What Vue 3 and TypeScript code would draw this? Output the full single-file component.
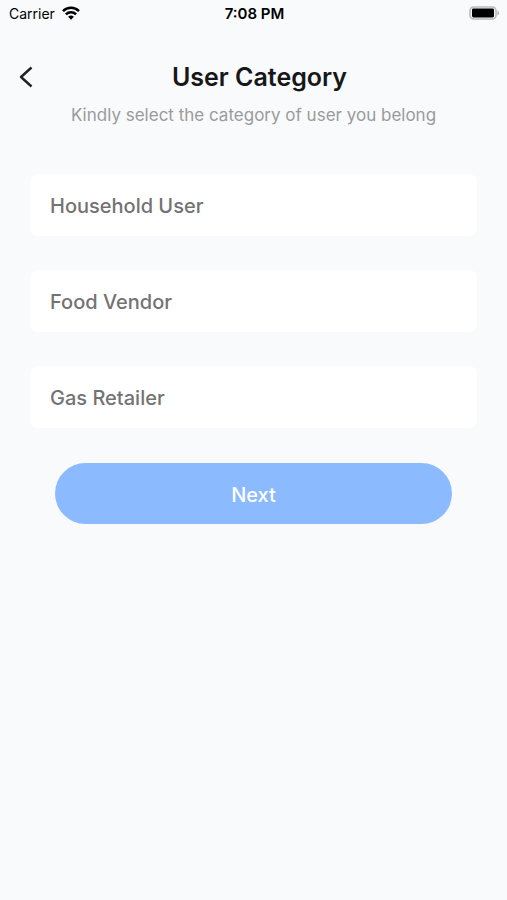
<script setup lang="ts">
import { ref } from 'vue'

const categories: string[] = ['Household User', 'Food Vendor', 'Gas Retailer']
const selected = ref<string | null>(null)
</script>

<template>
  <div class="screen">
    <div class="status">
      <div class="carrier">
        <span>Carrier</span>
        <svg class="wifi" viewBox="0 0 18 14" aria-hidden="true">
          <path d="M1 5.1a11.4 11.4 0 0 1 16 0M3.9 8.3a7.2 7.2 0 0 1 10.2 0" fill="none" stroke="#000" stroke-width="2.5" />
          <path d="M9 13.8 6.1 10.8a4.2 4.2 0 0 1 5.8 0z" fill="#000" />
        </svg>
      </div>
      <span class="time">7:08 PM</span>
      <svg class="battery" viewBox="0 0 31 14" aria-hidden="true">
        <rect x="1" y="1" width="26" height="12" rx="3.5" fill="#f5f5f5" stroke="#b9babc" stroke-width="1.6" />
        <rect x="3" y="2.5" width="22" height="9" rx="1.4" fill="#000" />
        <path d="M28.4 4.7c2.3.6 2.3 4 0 4.6z" fill="#b0b1b3" />
      </svg>
    </div>

    <header class="header">
      <button class="back" type="button" aria-label="Back">
        <svg viewBox="0 0 14 22" aria-hidden="true">
          <path d="M12.500 1.500 2 11l10.500 9.500" fill="none" stroke="#222" stroke-width="2.4" stroke-linejoin="round" />
        </svg>
      </button>
      <h1>User Category</h1>
    </header>
    <p class="hint">Kindly select the category of user you belong</p>

    <main class="options">
      <button
        v-for="category in categories"
        :key="category"
        type="button"
        class="option"
        :aria-pressed="selected === category"
        @click="selected = category"
      >
        {{ category }}
      </button>
      <button class="next" type="button">Next</button>
    </main>
  </div>
</template>

<style>
body {
  margin: 0;
  background: #f8fafc;
}
</style>

<style scoped>
.screen {
  min-height: 100vh;
  background: #f8fafc;
  font-family: Inter, 'Liberation Sans', sans-serif;
  color: #171717;
}

.status {
  display: grid;
  grid-template-columns: 1fr auto 1fr;
  align-items: center;
  height: 26px;
  padding: 0 7px 0 9px;
  box-sizing: border-box;
  font-size: 14px;
  color: #000;
}

.carrier {
  display: flex;
  align-items: center;
  gap: 7px;
}

.wifi {
  width: 18px;
  height: 14px;
}

.time {
  font-size: 15px;
  font-weight: 600;
}

.battery {
  justify-self: end;
  width: 31px;
  height: 14px;
}

.header {
  display: grid;
  grid-template-columns: 32px 1fr 20px;
  align-items: center;
  margin-top: 35px;
  padding: 0 10px;
}

.back {
  display: flex;
  justify-content: center;
  align-items: center;
  width: 32px;
  height: 32px;
  padding: 0;
  border: 0;
  background: none;
}

.back svg {
  width: 14px;
  height: 22px;
}

h1 {
  margin: 0;
  font-size: 25px;
  line-height: 32px;
  font-weight: 600;
  text-align: center;
}

.hint {
  margin: 10px 0 0;
  font-size: 17px;
  line-height: 24px;
  text-align: center;
  color: #9b9b9b;
}

.options {
  display: flex;
  flex-direction: column;
  gap: 34px;
  padding: 47px 30px;
}

.option {
  height: 62px;
  padding: 2px 20px 0;
  border: 0;
  border-radius: 8px;
  background: #fff;
  font: 500 20px/24px Inter, 'Liberation Sans', sans-serif;
  text-align: left;
  color: #737373;
}

.next {
  height: 61px;
  margin: 1px 25px 0;
  padding: 2px 0 0;
  border: 0;
  border-radius: 31px;
  background: #8cbaff;
  font: 500 20px/24px Inter, 'Liberation Sans', sans-serif;
  color: #fff;
}
</style>
